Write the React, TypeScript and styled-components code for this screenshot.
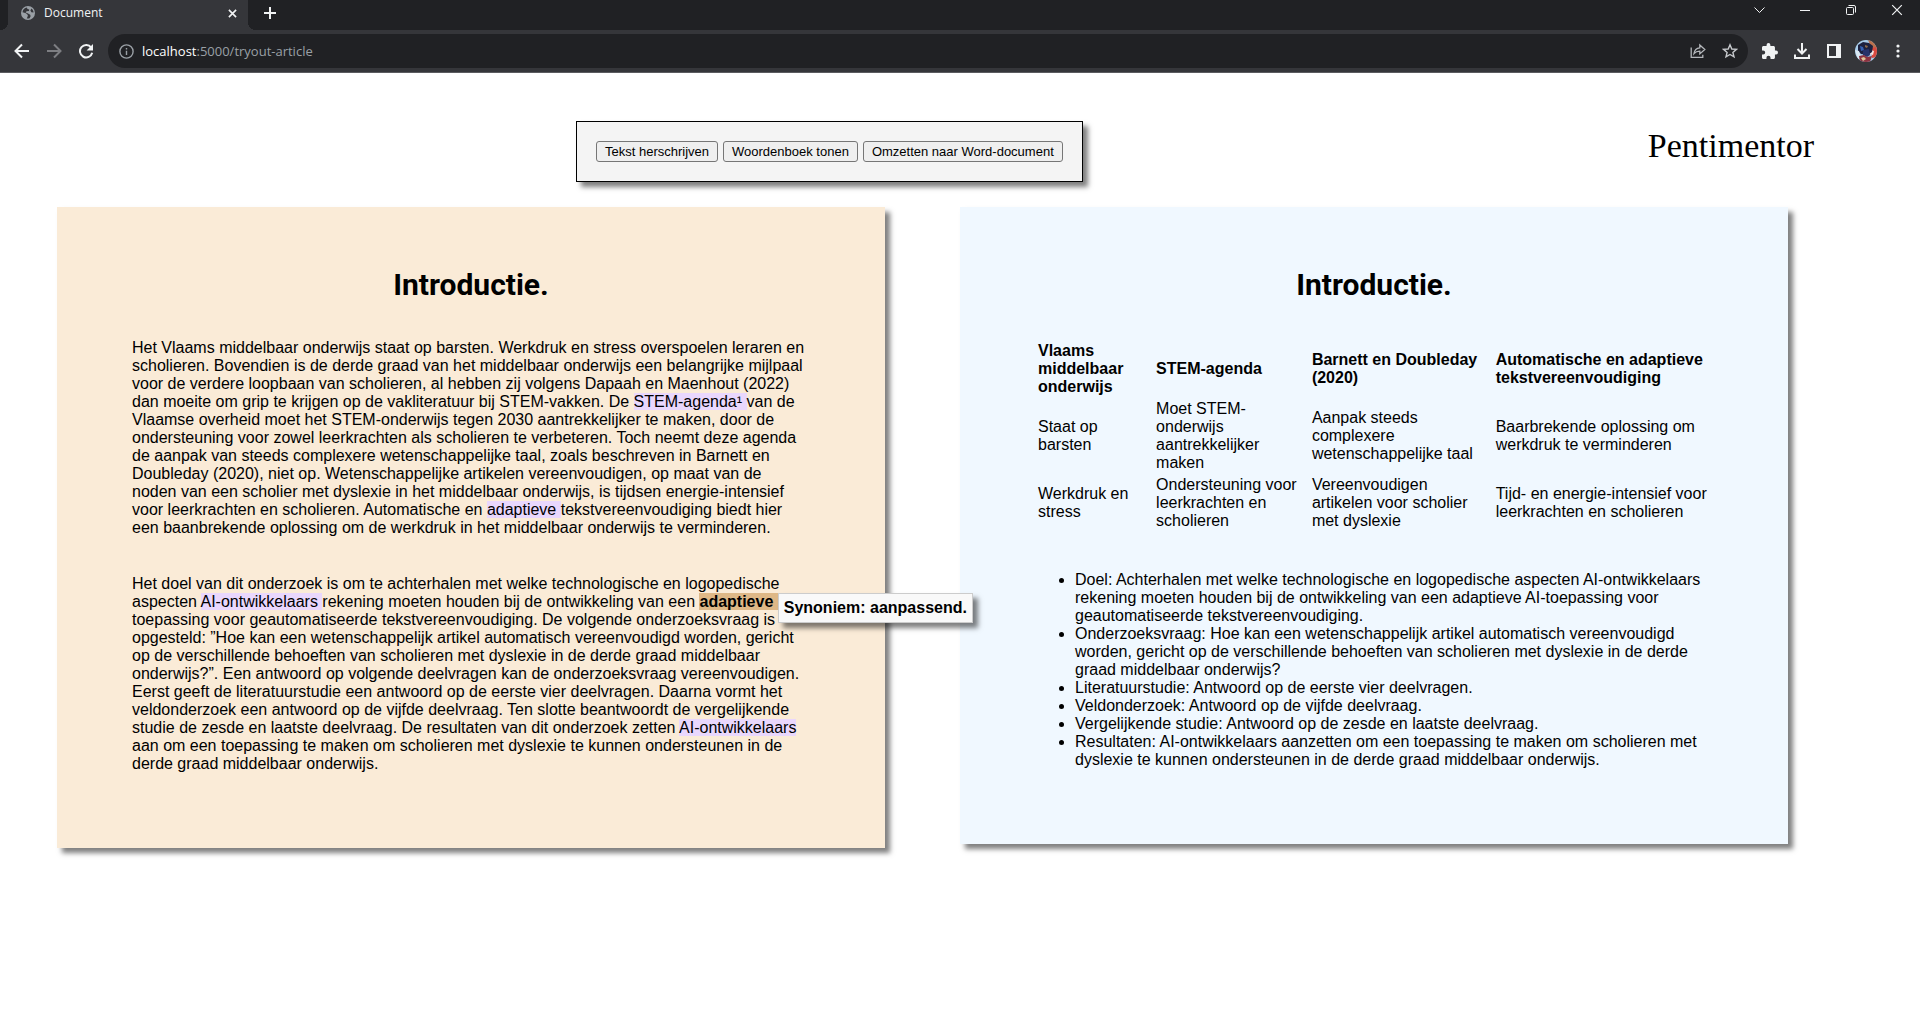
import React, { useState } from "react";
import styled, { createGlobalStyle } from "styled-components";

const sans = `Arial, "Liberation Sans", sans-serif`;
const ui = `"Segoe UI", "Open Sans", "Noto Sans", sans-serif`;
const dropShadow = "5px 5px 5px rgba(0, 0, 0, 0.5)";

const GlobalStyle = createGlobalStyle`
  * { box-sizing: border-box; }
  body {
    margin: 0;
    background: #fff;
    color: #000;
    font-family: ${sans};
    font-size: 16px;
    line-height: 18px;
  }
`;

/* ---------- browser frame ---------- */

const TabStrip = styled.div`
  display: flex;
  align-items: flex-start;
  height: 30px;
  padding-left: 8px;
  background: #202124;
`;

const Tab = styled.div`
  position: relative;
  display: flex;
  align-items: center;
  gap: 9px;
  width: 240px;
  height: 30px;
  padding: 0 7px 4px 13px;
  background: #35363a;
  color: #f1f3f4;
  font-family: ${ui};
  font-size: 12px;
  line-height: 16px;

  &::before,
  &::after {
    content: "";
    position: absolute;
    bottom: 0;
    width: 8px;
    height: 8px;
  }
  &::before {
    right: 100%;
    background: radial-gradient(circle at 0 0, #202124 8px, #35363a 8px);
  }
  &::after {
    left: 100%;
    background: radial-gradient(circle at 100% 0, #202124 8px, #35363a 8px);
  }
`;

const TabTitle = styled.span`
  flex: 1;
`;

const IconButton = styled.button<{ $w?: number; $h?: number; $color?: string }>`
  display: flex;
  align-items: center;
  justify-content: center;
  flex: none;
  width: ${(p) => p.$w ?? 32}px;
  height: ${(p) => p.$h ?? 32}px;
  padding: 0;
  border: 0;
  background: none;
  color: ${(p) => p.$color ?? "#f1f3f4"};
`;

const NewTab = styled(IconButton)`
  margin-left: 8px;
`;

const WindowControls = styled.div`
  display: flex;
  margin-left: auto;
`;

const NavBar = styled.nav`
  display: flex;
  align-items: center;
  height: 43px;
  padding: 0 6px;
  background: #35363a;
  border-bottom: 1px solid #5b5c60;
`;

const AddressBar = styled.div`
  display: flex;
  flex: 1;
  align-items: center;
  height: 34px;
  margin: 0 6px;
  padding: 0 2px;
  border-radius: 17px;
  background: #202124;
`;

const UrlText = styled.button`
  flex: 1;
  padding: 0;
  border: 0;
  background: none;
  color: #9aa0a6;
  font-family: ${ui};
  font-size: 13px;
  line-height: 18px;
  text-align: left;
  cursor: text;
`;

const UrlHost = styled.span`
  color: #fff;
`;

const UrlInput = styled.input`
  flex: 1;
  padding: 0;
  border: 0;
  outline: 0;
  background: none;
  color: #fff;
  font-family: ${ui};
  font-size: 13px;
  line-height: 18px;
`;

/* ---------- page ---------- */

const Header = styled.header`
  display: flex;
  align-items: flex-start;
  justify-content: space-between;
  padding: 48px 106px 0 30%;
`;

const Toolbar = styled.div`
  display: flex;
  gap: 5px;
  padding: 19px;
  border: 1px solid #000;
  background: #f4f4f4;
  box-shadow: ${dropShadow};
`;

const ToolButton = styled.button`
  height: 21px;
  padding: 0 8px;
  border: 1px solid #767676;
  border-radius: 3px;
  background: #efefef;
  color: #000;
  font-family: ${sans};
  font-size: 13px;
  line-height: 18px;
`;

const Brand = styled.span`
  padding-top: 5px;
  font-family: "Liberation Serif", serif;
  font-size: 34px;
  line-height: 40px;
`;

const Columns = styled.main`
  display: flex;
  align-items: flex-start;
  gap: 75px;
  padding: 25px 132px 60px 57px;
`;

const Sheet = styled.article<{ $bg: string }>`
  flex: 1 1 0;
  min-width: 0;
  padding: 59px 75px 75px;
  background: ${(p) => p.$bg};
  box-shadow: ${dropShadow};
`;

const Title = styled.h1`
  margin: 0 0 35px;
  font-family: Roboto, ${sans};
  font-size: 30px;
  font-weight: 700;
  line-height: 38px;
  text-align: center;
`;

const Paragraph = styled.p`
  margin: 0;
  & + & {
    margin-top: 38px;
  }
`;

const Term = styled.span`
  background: #e9d7fd;
`;

const ActiveTerm = styled.span`
  position: relative;
  background: #deb887;
  font-weight: 700;
`;

const Tooltip = styled.span`
  position: absolute;
  top: 0;
  left: 100%;
  z-index: 1;
  padding: 5px;
  border: 1px solid #ccc;
  background: #f9f9f9;
  box-shadow: ${dropShadow};
  white-space: nowrap;
`;

const Summary = styled.table`
  margin-bottom: 38px;
  border-spacing: 2px;
  text-align: left;

  th,
  td {
    padding: 1px;
  }
`;

const Points = styled.ul`
  margin: 0;
  padding-left: 40px;
`;

/* ---------- icons ---------- */

const line = { fill: "none", stroke: "currentColor" } as const;

const GlobeIcon = () => (
  <svg width="14" height="14" viewBox="0 0 14 14">
    <circle cx="7" cy="7" r="7" fill="#9aa0a6" />
    <path
      d="M6 1.6C3.500 2 1.700 3.800 1.500 6.200L5 7.200 6.800 9v1L5.800 12.400C7 12.700 8 12.600 8.600 12.300L9.600 10.200 9.200 8.700 6.600 7.300 4.600 6.600 5.600 5.200 8 5 8.200 3.600 6.400 3ZM10.400 2.600 9.400 4.600 10.400 6.200 12.600 6.600C12.400 4.800 11.700 3.500 10.400 2.600Z"
      fill="#35363a"
    />
  </svg>
);

const CrossIcon = ({ size, weight }: { size: number; weight: number }) => (
  <svg width={size} height={size} viewBox="0 0 10 10" {...line} strokeWidth={weight}>
    <path d="M1 1l8 8M9 1l-8 8" />
  </svg>
);

const PlusIcon = () => (
  <svg width="12" height="12" viewBox="0 0 12 12" {...line} strokeWidth="2">
    <path d="M6 0v12M0 6h12" />
  </svg>
);

const ArrowIcon = ({ forward }: { forward?: boolean }) => (
  <svg width="16" height="16" viewBox="0 0 16 16" {...line} strokeWidth="2">
    <path d={forward ? "M1 8h13M8 1.500 14.500 8 8 14.500" : "M15 8H2M8 1.500 1.500 8 8 14.500"} />
  </svg>
);

const ReloadIcon = () => (
  <svg width="16" height="16" viewBox="0 0 16 16">
    <path d="M13.200 4.600A6.200 6.200 0 1 0 14.200 9.800" {...line} strokeWidth="2" />
    <path d="M15 1v6.400H8.600Z" fill="currentColor" />
  </svg>
);

const InfoIcon = () => (
  <svg width="15" height="15" viewBox="0 0 15 15" {...line} strokeWidth="1.400">
    <circle cx="7.500" cy="7.500" r="6.600" />
    <path d="M7.500 6.700v4.300M7.500 3.900v1.500" />
  </svg>
);

const ShareIcon = () => (
  <svg width="16" height="16" viewBox="0 0 16 16" {...line} strokeWidth="1.300">
    <path d="M1.200 4.500v9.800h11.600v-2.500" />
    <path d="M4 10.600C4.500 7 6.400 5 9.800 4.800V2l5 4.500-5 4.400V8.200C7.200 8.200 5.400 9 4 10.600Z" />
  </svg>
);

const StarIcon = () => (
  <svg width="16" height="16" viewBox="0 0 16 16" {...line} strokeWidth="1.400">
    <path d="M8 1.800 9.800 6l4.600.4-3.500 3 1.100 4.500L8 11.500 4 13.900l1.100-4.500-3.500-3L6.200 6Z" />
  </svg>
);

const PuzzleIcon = () => (
  <svg width="16" height="16" viewBox="2 1 21 21">
    <path
      fill="currentColor"
      d="M20.500 11H19V7c0-1.100-.9-2-2-2h-4V3.500a2.500 2.500 0 0 0-5 0V5H4c-1.100 0-2 .9-2 2v3.800h1.500a2.700 2.700 0 0 1 0 5.400H2V20c0 1.100.9 2 2 2h3.800v-1.500a2.700 2.700 0 0 1 5.400 0V22H17c1.100 0 2-.9 2-2v-4h1.500a2.500 2.500 0 0 0 0-5z"
    />
  </svg>
);

const DownloadIcon = () => (
  <svg width="16" height="17" viewBox="0 0 16 17" {...line} strokeWidth="2">
    <path d="M8 0v10M3.500 6 8 10.500 12.500 6M1 11.500V15h14v-3.500" />
  </svg>
);

const PanelIcon = () => (
  <svg width="14" height="14" viewBox="0 0 14 14">
    <path d="M1 1h12v12H1Z" {...line} strokeWidth="2" />
    <path d="M9 0h5v14H9Z" fill="currentColor" />
  </svg>
);

const Avatar = () => (
  <svg width="22" height="22" viewBox="0 0 22 22">
    <defs>
      <clipPath id="avatar">
        <circle cx="11" cy="11" r="11" />
      </clipPath>
    </defs>
    <g clipPath="url(#avatar)">
      <path d="M0 0h22v22H0Z" fill="#a9cdea" />
      <path d="M13 0h9v8l-5 1Z" fill="#b9704c" />
      <path d="M16 8l6-1v10l-5 1Z" fill="#d8493f" />
      <path d="M16 10l3 1-1 4-3-1Z" fill="#f5e6e2" />
      <path d="M3 5l5-3 6 1 4 3-1 6-4 3-7-1-3-3Z" fill="#1d2140" />
      <path d="M5 6l3 1 1 3-3 1Z" fill="#3561b5" />
      <path d="M8 10l6-1 1 6-3 2-4-2Z" fill="#27336a" />
      <path d="M10 5l3 1-1 2-2-1Z" fill="#8d6a48" />
      <path d="M0 10l4 1 2 6-3 3Z" fill="#dbe8f2" />
      <path d="M4 16l5-1 3 2 5-1-2 6H5Z" fill="#8c3340" />
      <path d="M6 18l3-1 2 2-3 2Z" fill="#e0c79a" />
    </g>
  </svg>
);

const DotsIcon = () => (
  <svg width="4" height="14" viewBox="0 0 4 14" fill="currentColor">
    <circle cx="2" cy="2" r="1.600" />
    <circle cx="2" cy="7" r="1.600" />
    <circle cx="2" cy="12" r="1.600" />
  </svg>
);

const ChevronIcon = () => (
  <svg width="11" height="7" viewBox="0 0 11 7" {...line}>
    <path d="M.5.500l5 5 5-5" />
  </svg>
);

const MinimizeIcon = () => (
  <svg width="10" height="1" viewBox="0 0 10 1">
    <path d="M0 0h10v1H0Z" fill="currentColor" />
  </svg>
);

const RestoreIcon = () => (
  <svg width="10" height="10" viewBox="0 0 10 10" {...line}>
    <rect x=".5" y="2.500" width="7" height="7" rx="1" />
    <path d="M2.500.500H8a1.500 1.500 0 0 1 1.500 1.500v5.500" />
  </svg>
);

/* ---------- data ---------- */

const headings = [
  "Vlaams middelbaar onderwijs",
  "STEM-agenda",
  "Barnett en Doubleday (2020)",
  "Automatische en adaptieve tekstvereenvoudiging",
];

const rows = [
  [
    "Staat op barsten",
    "Moet STEM-onderwijs aantrekkelijker maken",
    "Aanpak steeds complexere wetenschappelijke taal",
    "Baarbrekende oplossing om werkdruk te verminderen",
  ],
  [
    "Werkdruk en stress",
    "Ondersteuning voor leerkrachten en scholieren",
    "Vereenvoudigen artikelen voor scholier met dyslexie",
    "Tijd- en energie-intensief voor leerkrachten en scholieren",
  ],
];

const points = [
  "Doel: Achterhalen met welke technologische en logopedische aspecten AI-ontwikkelaars rekening moeten houden bij de ontwikkeling van een adaptieve AI-toepassing voor geautomatiseerde tekstvereenvoudiging.",
  "Onderzoeksvraag: Hoe kan een wetenschappelijk artikel automatisch vereenvoudigd worden, gericht op de verschillende behoeften van scholieren met dyslexie in de derde graad middelbaar onderwijs?",
  "Literatuurstudie: Antwoord op de eerste vier deelvragen.",
  "Veldonderzoek: Antwoord op de vijfde deelvraag.",
  "Vergelijkende studie: Antwoord op de zesde en laatste deelvraag.",
  "Resultaten: AI-ontwikkelaars aanzetten om een toepassing te maken om scholieren met dyslexie te kunnen ondersteunen in de derde graad middelbaar onderwijs.",
];

function Address() {
  const [editing, setEditing] = useState(false);
  const [host, path] = ["localhost", ":5000/tryout-article"];
  return editing ? (
    <UrlInput autoFocus aria-label="Adres" defaultValue={host + path} onBlur={() => setEditing(false)} />
  ) : (
    <UrlText onClick={() => setEditing(true)}>
      <UrlHost>{host}</UrlHost>
      {path}
    </UrlText>
  );
}

function BrowserFrame() {
  return (
    <>
      <TabStrip>
        <Tab>
          <GlobeIcon />
          <TabTitle>Document</TabTitle>
          <IconButton $w={18} $h={18} aria-label="Tabblad sluiten">
            <CrossIcon size={9} weight={1.8} />
          </IconButton>
        </Tab>
        <NewTab $w={28} $h={26} aria-label="Nieuw tabblad">
          <PlusIcon />
        </NewTab>
        <WindowControls>
          <IconButton $w={46} $h={20} aria-label="Tabbladen zoeken"><ChevronIcon /></IconButton>
          <IconButton $w={46} $h={20} aria-label="Minimaliseren"><MinimizeIcon /></IconButton>
          <IconButton $w={46} $h={20} aria-label="Verkleinen"><RestoreIcon /></IconButton>
          <IconButton $w={46} $h={20} aria-label="Sluiten"><CrossIcon size={12} weight={1} /></IconButton>
        </WindowControls>
      </TabStrip>
      <NavBar>
        <IconButton aria-label="Vorige"><ArrowIcon /></IconButton>
        <IconButton $color="#7d7e82" aria-label="Volgende"><ArrowIcon forward /></IconButton>
        <IconButton aria-label="Vernieuwen"><ReloadIcon /></IconButton>
        <AddressBar>
          <IconButton $color="#9aa0a6" aria-label="Site-informatie"><InfoIcon /></IconButton>
          <Address />
          <IconButton $color="#b4b7bb" aria-label="Delen"><ShareIcon /></IconButton>
          <IconButton $color="#c6c9cc" aria-label="Bladwijzer"><StarIcon /></IconButton>
        </AddressBar>
        <IconButton aria-label="Extensies"><PuzzleIcon /></IconButton>
        <IconButton aria-label="Downloads"><DownloadIcon /></IconButton>
        <IconButton aria-label="Zijpaneel"><PanelIcon /></IconButton>
        <IconButton aria-label="Profiel"><Avatar /></IconButton>
        <IconButton aria-label="Menu"><DotsIcon /></IconButton>
      </NavBar>
    </>
  );
}

export default function App() {
  return (
    <>
      <GlobalStyle />
      <BrowserFrame />
      <Header>
        <Toolbar>
          <ToolButton>Tekst herschrijven</ToolButton>
          <ToolButton>Woordenboek tonen</ToolButton>
          <ToolButton>Omzetten naar Word-document</ToolButton>
        </Toolbar>
        <Brand>Pentimentor</Brand>
      </Header>
      <Columns>
        <Sheet $bg="#faebd7">
          <Title>Introductie.</Title>
          <Paragraph>
            Het Vlaams middelbaar onderwijs staat op barsten. Werkdruk en stress overspoelen leraren en
            scholieren. Bovendien is de derde graad van het middelbaar onderwijs een belangrijke mijlpaal
            voor de verdere loopbaan van scholieren, al hebben zij volgens Dapaah en Maenhout (2022) dan
            moeite om grip te krijgen op de vakliteratuur bij STEM-vakken. De <Term>STEM-agenda¹ </Term>
            van de Vlaamse overheid moet het STEM-onderwijs tegen 2030 aantrekkelijker te maken, door de
            ondersteuning voor zowel leerkrachten als scholieren te verbeteren. Toch neemt deze agenda de
            aanpak van steeds complexere wetenschappelijke taal, zoals beschreven in Barnett en Doubleday
            (2020), niet op. Wetenschappelijke artikelen vereenvoudigen, op maat van de noden van een
            scholier met dyslexie in het middelbaar onderwijs, is tijdsen energie-intensief voor
            leerkrachten en scholieren. Automatische en <Term>adaptieve </Term>
            tekstvereenvoudiging biedt hier een baanbrekende oplossing om de werkdruk in het middelbaar
            onderwijs te verminderen.
          </Paragraph>
          <Paragraph>
            Het doel van dit onderzoek is om te achterhalen met welke technologische en logopedische
            aspecten <Term>AI-ontwikkelaars </Term>
            rekening moeten houden bij de ontwikkeling van een{" "}
            <ActiveTerm>
              adaptieve <Tooltip role="tooltip">Synoniem: aanpassend.</Tooltip>
            </ActiveTerm>
            AI-toepassing voor geautomatiseerde tekstvereenvoudiging. De volgende onderzoeksvraag is
            opgesteld: ”Hoe kan een wetenschappelijk artikel automatisch vereenvoudigd worden, gericht op
            de verschillende behoeften van scholieren met dyslexie in de derde graad middelbaar
            onderwijs?”. Een antwoord op volgende deelvragen kan de onderzoeksvraag vereenvoudigen. Eerst
            geeft de literatuurstudie een antwoord op de eerste vier deelvragen. Daarna vormt het
            veldonderzoek een antwoord op de vijfde deelvraag. Ten slotte beantwoordt de vergelijkende
            studie de zesde en laatste deelvraag. De resultaten van dit onderzoek zetten{" "}
            <Term>AI-ontwikkelaars </Term>
            aan om een toepassing te maken om scholieren met dyslexie te kunnen ondersteunen in de derde
            graad middelbaar onderwijs.
          </Paragraph>
        </Sheet>
        <Sheet $bg="#f0f8ff">
          <Title>Introductie.</Title>
          <Summary>
            <thead>
              <tr>
                {headings.map((h) => (
                  <th key={h} scope="col">{h}</th>
                ))}
              </tr>
            </thead>
            <tbody>
              {rows.map((cells) => (
                <tr key={cells[0]}>
                  {cells.map((c) => (
                    <td key={c}>{c}</td>
                  ))}
                </tr>
              ))}
            </tbody>
          </Summary>
          <Points>
            {points.map((p) => (
              <li key={p}>{p}</li>
            ))}
          </Points>
        </Sheet>
      </Columns>
    </>
  );
}
